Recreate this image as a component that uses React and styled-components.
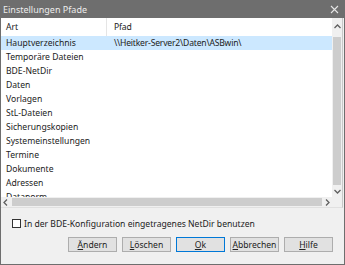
import styled, { createGlobalStyle } from 'styled-components';

const GlobalStyle = createGlobalStyle`
    html, body {
        margin: 0;
        padding: 0;
        background: #ffffff;
    }
    * {
        box-sizing: border-box;
    }
`

const rows = [
    { art: 'Hauptverzeichnis', pfad: '\\\\Heitker-Server2\\Daten\\ASBwin\\' },
    { art: 'Temporäre Dateien', pfad: '' },
    { art: 'BDE-NetDir', pfad: '' },
    { art: 'Daten', pfad: '' },
    { art: 'Vorlagen', pfad: '' },
    { art: 'StL-Dateien', pfad: '' },
    { art: 'Sicherungskopien', pfad: '' },
    { art: 'Systemeinstellungen', pfad: '' },
    { art: 'Termine', pfad: '' },
    { art: 'Dokumente', pfad: '' },
    { art: 'Adressen', pfad: '' },
    { art: 'Datanorm', pfad: '' },
]

const buttons = [
    { key: 'Ä', rest: 'ndern' },
    { key: 'L', rest: 'öschen' },
    { key: 'O', rest: 'k', def: true },
    { key: 'A', rest: 'bbrechen' },
    { key: 'H', rest: 'ilfe' },
]

function Arrow({ dir }) {
    const paths = {
        up: 'M1.5 5 L4.5 2 L7.5 5',
        down: 'M1.5 3 L4.5 6 L7.5 3',
        left: 'M5 1.5 L2 4.5 L5 7.5',
        right: 'M3 1.5 L6 4.5 L3 7.5',
    }
    return (
        <svg width="9" height="9" viewBox="0 0 9 9">
            <path d={paths[dir]} fill="none" stroke="#606060" strokeWidth="1.3" />
        </svg>
    )
}

export default function App() {
    return (
        <>
            <GlobalStyle />
            <Window>
                <TitleBar>
                    <span>Einstellungen Pfade</span>
                    <svg width="9" height="9" viewBox="0 0 9 9">
                        <path d="M1 1 L8 8 M8 1 L1 8" stroke="#e6e6e6" strokeWidth="1.1" />
                    </svg>
                </TitleBar>
                <ListFrame>
                    <ListArea>
                        <Header>
                            <ArtCell>Art</ArtCell>
                            <HeadDivider />
                            <PfadCell>Pfad</PfadCell>
                        </Header>
                        {rows.map((row, index) => (
                            <Row key={index} $selected={index === 0}>
                                <ArtCell>{row.art}</ArtCell>
                                <PfadCell>{row.pfad}</PfadCell>
                            </Row>
                        ))}
                    </ListArea>
                    <VScroll>
                        <ScrollButton $h={19}><Arrow dir="up" /></ScrollButton>
                        <VThumb />
                        <ScrollButton $h={12}><Arrow dir="down" /></ScrollButton>
                    </VScroll>
                    <HScroll>
                        <ScrollButton $w={11}><Arrow dir="left" /></ScrollButton>
                        <HThumb />
                        <ScrollButton $w={10}><Arrow dir="right" /></ScrollButton>
                    </HScroll>
                    <Corner />
                </ListFrame>
                <CheckRow>
                    <CheckBox />
                    <span>In der BDE-Konfiguration eingetragenes NetDir benutzen</span>
                </CheckRow>
                <ButtonRow>
                    {buttons.map((b) => (
                        <Button key={b.key} $default={b.def}>
                            <u>{b.key}</u>{b.rest}
                        </Button>
                    ))}
                </ButtonRow>
            </Window>
        </>
    )
}

const Window = styled.div`
    width: 345px;
    height: 265px;
    display: flex;
    flex-direction: column;
    background-color: #f0f0f0;
    border: 1px solid #6e6e6e;
    border-top: none;
    font-family: 'Noto Sans', sans-serif;
    font-size: 8.6px;
    color: #222222;
    overflow: hidden;
`

const TitleBar = styled.div`
    height: 18px;
    flex: none;
    display: flex;
    align-items: center;
    justify-content: space-between;
    padding: 0 6px 0 3px;
    margin: 0 -1px;
    background-color: #6e6e6e;
    color: #ececec;
    font-size: 9px;
`

const ListFrame = styled.div`
    height: 190px;
    flex: none;
    display: grid;
    grid-template-columns: 1fr 10px;
    grid-template-rows: 1fr 10px;
    background-color: #ffffff;
    border-right: 1px solid #c8c8c8;
    border-bottom: 1px solid #e0e0e0;
    margin-right: 1px;
`

const ListArea = styled.div`
    overflow: hidden;
    display: flex;
    flex-direction: column;
`

const Header = styled.div`
    height: 18px;
    flex: none;
    display: flex;
    align-items: center;
    position: relative;
    background-color: #ffffff;
`

const HeadDivider = styled.div`
    position: absolute;
    left: 105px;
    top: 0;
    width: 1px;
    height: 18px;
    background-color: #e5e5e5;
`

const Row = styled.div`
    height: 14px;
    flex: none;
    display: flex;
    align-items: center;
    background-color: ${(p) => (p.$selected ? '#cce8ff' : 'transparent')};
`

const ArtCell = styled.div`
    width: 106px;
    flex: none;
    padding-left: 5px;
    white-space: nowrap;
`

const PfadCell = styled.div`
    padding-left: 7px;
    white-space: nowrap;
    letter-spacing: -0.2px;
`

const VScroll = styled.div`
    display: flex;
    flex-direction: column;
    background-color: #f0f0f0;
`

const HScroll = styled.div`
    display: flex;
    background-color: #f0f0f0;
`

const ScrollButton = styled.div`
    flex: none;
    width: ${(p) => (p.$w ? `${p.$w}px` : 'auto')};
    height: ${(p) => (p.$h ? `${p.$h}px` : 'auto')};
    display: flex;
    align-items: center;
    justify-content: center;
`

const VThumb = styled.div`
    flex: 1;
    margin: 0 1px;
    background-color: #cdcdcd;
`

const HThumb = styled.div`
    flex: 1;
    margin: 1px 0;
    background-color: #cdcdcd;
`

const Corner = styled.div`
    background-color: #f0f0f0;
`

const CheckRow = styled.div`
    display: flex;
    align-items: center;
    gap: 3px;
    padding: 0 0 0 11px;
    margin-top: 10px;
    height: 11px;
`

const CheckBox = styled.div`
    width: 9px;
    height: 9px;
    border: 1px solid #333333;
    background-color: #ffffff;
`

const ButtonRow = styled.div`
    display: flex;
    justify-content: flex-end;
    gap: 5px;
    padding-right: 11px;
    margin-top: 8px;
`

const Button = styled.div`
    width: 49px;
    height: 15px;
    display: flex;
    align-items: center;
    justify-content: center;
    background-color: #e1e1e1;
    border: 1px solid ${(p) => (p.$default ? '#0078d7' : '#adadad')};
    color: #222222;

    u {
        text-decoration-thickness: 1px;
        text-underline-offset: 1px;
    }
`
